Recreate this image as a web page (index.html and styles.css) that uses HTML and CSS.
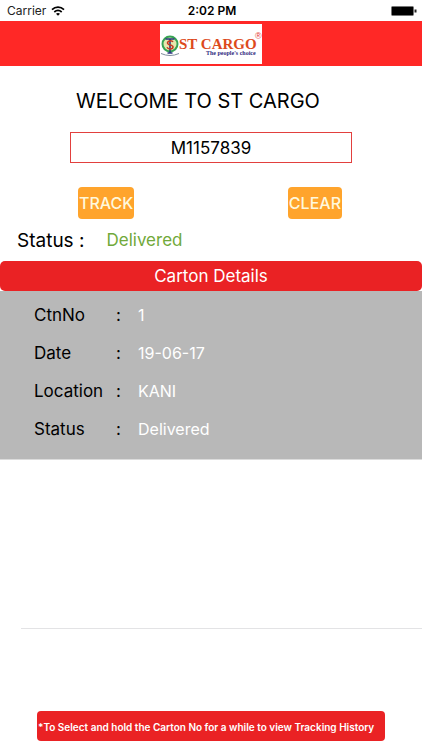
FILE: index.html
```html
<!DOCTYPE html>
<html lang="en">
<head>
<meta charset="utf-8">
<meta name="viewport" content="width=device-width, initial-scale=1">
<title>ST Cargo</title>
<link rel="stylesheet" href="styles.css">
</head>
<body>
<div class="statusbar">
  <span class="carrier">Carrier
    <svg width="14" height="10" viewBox="0 0 14 10" fill="none" stroke="#000" stroke-width="1.7" aria-hidden="true"><path d="M1 3.6C4.4.3 9.6.3 13 3.6M3.3 6C5.500 4 8.500 4 10.700 6"/><path d="M7 9.800 5 7.700Q7 6.200 9 7.700Z" fill="#000" stroke="none"/></svg>
  </span>
  <span class="clock">2:02 PM</span>
  <span class="battery">
    <svg width="26" height="10" viewBox="0 0 26 10" aria-hidden="true"><rect x=".5" y=".5" width="22" height="9" rx="1" fill="#000" stroke="#777"/><rect x="23.500" y="3.500" width="2" height="3" fill="#222"/></svg>
  </span>
</div>
<header class="topbar">
  <svg class="logo" width="102" height="40" viewBox="0 0 102 40" role="img" aria-label="ST Cargo, The people's choice">
    <rect width="102" height="40" fill="#fff"/>
    <path d="M1 29.500Q10 33.500 19 29.500" fill="none" stroke="#7d8b9c" stroke-width="1"/>
    <circle cx="10" cy="20" r="7.500" fill="#e6e7ad" stroke="#36a354" stroke-width="2"/>
    <path d="M5.500 15h9M10 15V29M7.500 29h5" fill="none" stroke="#26347c" stroke-width="1.500"/>
    <path d="M13 18C12 16.200 7.500 16.500 7.500 19S13 20.500 13 23 8 25.500 7 23.300" fill="none" stroke="#c63a24" stroke-width="1.500"/>
    <text class="logo-name" x="19" y="25">ST CARGO</text>
    <text class="logo-tag" x="46" y="31">The people's choice</text>
    <text class="logo-mark" x="95" y="15">®</text>
  </svg>
</header>
<main>
  <h1>WELCOME TO ST CARGO</h1>
  <form class="search">
    <input type="text" value="M1157839" aria-label="Tracking number">
    <div class="actions">
      <button type="button">TRACK</button>
      <button type="button">CLEAR</button>
    </div>
  </form>
  <p class="summary"><span class="summary-label">Status :</span><span class="delivered">Delivered</span></p>
  <h2>Carton Details</h2>
  <ul class="cartons">
    <li class="selected">
      <dl>
        <dt>CtnNo</dt><dd>1</dd>
        <dt>Date</dt><dd>19-06-17</dd>
        <dt>Location</dt><dd>KANI</dd>
        <dt>Status</dt><dd>Delivered</dd>
      </dl>
    </li>
    <li></li>
  </ul>
</main>
<footer class="hint">*To Select and hold the Carton No for a while to view Tracking History</footer>
</body>
</html>
```

FILE: styles.css
```css
* {
  box-sizing: border-box;
}

body {
  margin: 0;
  min-height: 100vh;
  display: flex;
  flex-direction: column;
  background: #fff;
  color: #000;
  font-family: Inter, "Liberation Sans", sans-serif;
}

.statusbar {
  display: grid;
  grid-template-columns: 1fr auto 1fr;
  align-items: center;
  height: 21px;
  padding: 0 5px 0 7px;
  font-size: 12px;
}

.carrier {
  display: flex;
  align-items: center;
  gap: 5px;
  color: #222;
}

.clock {
  font-weight: 600;
}

.battery {
  display: flex;
  justify-content: flex-end;
}

.topbar {
  display: flex;
  align-items: center;
  justify-content: center;
  height: 45px;
  background: #ff2826;
}

.logo-name {
  font: bold 15px "Liberation Serif", serif;
  fill: #dd4a1c;
}

.logo-tag {
  font: bold 6px "Liberation Serif", serif;
  fill: #302a80;
}

.logo-mark {
  font: 9px "Liberation Sans", sans-serif;
  fill: #e63a32;
}

main {
  flex: 1;
}

h1 {
  margin: 22px 0 0;
  padding-right: 26px;
  font-size: 20px;
  line-height: 26px;
  font-weight: 400;
  text-align: center;
}

.search {
  margin: 18px 70px 0;
}

.search input {
  display: block;
  width: 100%;
  height: 31px;
  padding: 0;
  border: 1px solid #e2403e;
  border-radius: 0;
  background: #fff;
  color: #000;
  font: 400 17px Inter, "Liberation Sans", sans-serif;
  text-align: center;
}

.actions {
  display: flex;
  justify-content: space-between;
  margin-top: 24px;
  padding: 0 10px 0 8px;
}

.actions button {
  height: 32px;
  padding: 0 1px;
  border: 0;
  border-radius: 4px;
  background: #ffa42c;
  color: #fff8dc;
  font: 500 16px Inter, "Liberation Sans", sans-serif;
}

.summary {
  display: flex;
  align-items: center;
  gap: 22px;
  height: 42px;
  margin: 0;
  padding-left: 17px;
  font-size: 17px;
}

.summary-label {
  font-size: 19px;
}

.delivered {
  color: #71a93a;
}

h2 {
  margin: 0;
  border-radius: 5px;
  background: #ea2224;
  color: #fff;
  font-size: 17px;
  line-height: 30px;
  font-weight: 400;
  text-align: center;
}

.cartons {
  margin: 0;
  padding: 0;
  list-style: none;
}

.cartons li {
  height: 169px;
  margin-left: 21px;
  border-bottom: 1px solid #e3e3e5;
}

.cartons .selected {
  margin-left: 0;
  background: #b8b8b8;
  border-bottom-color: #dcdcdc;
}

dl {
  display: grid;
  grid-template-columns: 104px 1fr;
  grid-auto-rows: 38px;
  align-items: center;
  margin: 0;
  padding: 5px 0 0 34px;
}

dt {
  display: flex;
  justify-content: space-between;
  padding-right: 17px;
  font-size: 17px;
}

dt::after {
  content: ":";
}

dd {
  margin: 0;
  color: #fff;
  font-size: 16px;
}

.hint {
  margin: 0 37px 9px;
  padding: 2px 0 0 1px;
  border-radius: 4px;
  background: #ea2224;
  color: #fff;
  font-size: 10px;
  line-height: 28px;
  font-weight: 600;
  white-space: nowrap;
}
```
